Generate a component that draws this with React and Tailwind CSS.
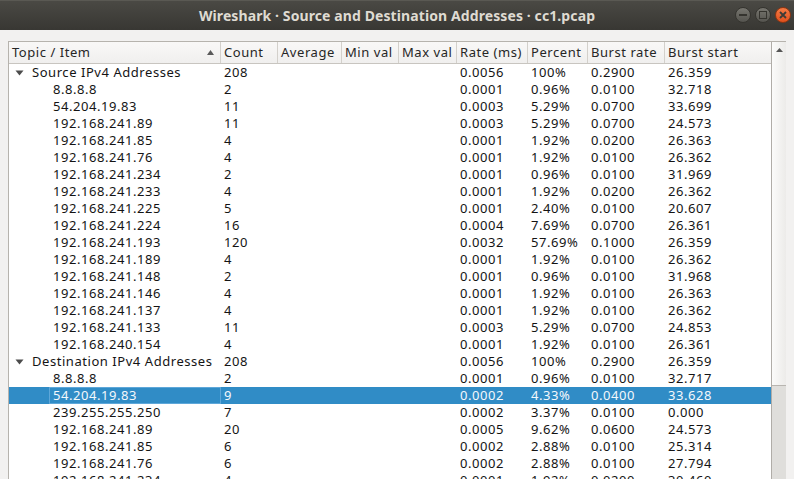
import React from "react";

const COLS = [212, 57, 64, 57, 58, 71, 60, 77, 106];
const HEAD = ["Topic / Item", "Count", "Average", "Min val", "Max val", "Rate (ms)", "Percent", "Burst rate", "Burst start"];

const rows = [
  { g: true, n: "Source IPv4 Addresses", c: "208", r: "0.0056", p: "100%", br: "0.2900", bs: "26.359" },
  { n: "8.8.8.8", c: "2", r: "0.0001", p: "0.96%", br: "0.0100", bs: "32.718" },
  { n: "54.204.19.83", c: "11", r: "0.0003", p: "5.29%", br: "0.0700", bs: "33.699" },
  { n: "192.168.241.89", c: "11", r: "0.0003", p: "5.29%", br: "0.0700", bs: "24.573" },
  { n: "192.168.241.85", c: "4", r: "0.0001", p: "1.92%", br: "0.0200", bs: "26.363" },
  { n: "192.168.241.76", c: "4", r: "0.0001", p: "1.92%", br: "0.0100", bs: "26.362" },
  { n: "192.168.241.234", c: "2", r: "0.0001", p: "0.96%", br: "0.0100", bs: "31.969" },
  { n: "192.168.241.233", c: "4", r: "0.0001", p: "1.92%", br: "0.0200", bs: "26.362" },
  { n: "192.168.241.225", c: "5", r: "0.0001", p: "2.40%", br: "0.0100", bs: "20.607" },
  { n: "192.168.241.224", c: "16", r: "0.0004", p: "7.69%", br: "0.0700", bs: "26.361" },
  { n: "192.168.241.193", c: "120", r: "0.0032", p: "57.69%", br: "0.1000", bs: "26.359" },
  { n: "192.168.241.189", c: "4", r: "0.0001", p: "1.92%", br: "0.0100", bs: "26.362" },
  { n: "192.168.241.148", c: "2", r: "0.0001", p: "0.96%", br: "0.0100", bs: "31.968" },
  { n: "192.168.241.146", c: "4", r: "0.0001", p: "1.92%", br: "0.0100", bs: "26.363" },
  { n: "192.168.241.137", c: "4", r: "0.0001", p: "1.92%", br: "0.0100", bs: "26.362" },
  { n: "192.168.241.133", c: "11", r: "0.0003", p: "5.29%", br: "0.0700", bs: "24.853" },
  { n: "192.168.240.154", c: "4", r: "0.0001", p: "1.92%", br: "0.0100", bs: "26.361" },
  { g: true, n: "Destination IPv4 Addresses", c: "208", r: "0.0056", p: "100%", br: "0.2900", bs: "26.359" },
  { n: "8.8.8.8", c: "2", r: "0.0001", p: "0.96%", br: "0.0100", bs: "32.717" },
  { sel: true, n: "54.204.19.83", c: "9", r: "0.0002", p: "4.33%", br: "0.0400", bs: "33.628" },
  { n: "239.255.255.250", c: "7", r: "0.0002", p: "3.37%", br: "0.0100", bs: "0.000" },
  { n: "192.168.241.89", c: "20", r: "0.0005", p: "9.62%", br: "0.0600", bs: "24.573" },
  { n: "192.168.241.85", c: "6", r: "0.0002", p: "2.88%", br: "0.0100", bs: "25.314" },
  { n: "192.168.241.76", c: "6", r: "0.0002", p: "2.88%", br: "0.0100", bs: "27.794" },
  { n: "192.168.241.234", c: "4", r: "0.0001", p: "1.92%", br: "0.0200", bs: "30.460" },
];

function Tri() {
  return (
    <svg width="9" height="6" viewBox="0 0 9 6" className="shrink-0">
      <path d="M0.5 0.5 L8.5 0.5 L4.5 5.5 Z" fill="#4c4c4c" />
    </svg>
  );
}

function Row({ row }) {
  const sel = row.sel;
  const vals = [row.c, "", "", "", row.r, row.p, row.br, row.bs];
  return (
    <div className={`flex h-[17px] items-center shrink-0 ${sel ? "bg-[#308cc6] text-[#f4f8fc]" : "text-[#141414]"}`}>
      <div className="w-[212px] shrink-0 h-full flex items-center">
        {row.g ? (
          <div className="flex items-center pl-[6px]">
            <Tri />
            <span className="ml-[8px] whitespace-nowrap">{row.n}</span>
          </div>
        ) : sel ? (
          <div className="ml-[40px] flex-1 h-full border border-[#5ea7d9] flex items-center pl-[3px] whitespace-nowrap">{row.n}</div>
        ) : (
          <span className="pl-[44px] whitespace-nowrap">{row.n}</span>
        )}
      </div>
      {vals.map((v, i) => (
        <div key={i} style={{ width: COLS[i + 1] }} className="shrink-0 pl-[3px] whitespace-nowrap overflow-hidden">
          {v}
        </div>
      ))}
    </div>
  );
}

export default function App() {
  return (
    <div
      className="w-[794px] h-[479px] overflow-hidden bg-[#f2f1f0] flex flex-col"
      style={{ fontFamily: '"Noto Sans", "DejaVu Sans", sans-serif' }}
    >
      {/* Title bar */}
      <div className="h-[30px] shrink-0 bg-gradient-to-b from-[#4a4944] to-[#383733] border-t border-[#5a5953] flex items-center relative">
        <div className="flex-1 text-center text-[#dfdbd2] font-bold text-[14px] tracking-[0.1px]">
          Wireshark · Source and Destination Addresses · cc1.pcap
        </div>
        <div className="absolute right-[3px] top-[6px] flex gap-[4px]">
          <div className="w-[16px] h-[16px] rounded-full bg-gradient-to-b from-[#77766f] to-[#55544f] border border-[#35342f] flex items-center justify-center">
            <div className="w-[8px] h-[2px] bg-[#35342f]" />
          </div>
          <div className="w-[16px] h-[16px] rounded-full bg-gradient-to-b from-[#77766f] to-[#55544f] border border-[#35342f] flex items-center justify-center">
            <div className="w-[8px] h-[8px] border-[1.5px] border-[#35342f]" />
          </div>
          <div className="w-[16px] h-[16px] rounded-full bg-gradient-to-b from-[#f47a44] to-[#e0501c] border border-[#8f3510] flex items-center justify-center">
            <svg width="8" height="8" viewBox="0 0 8 8">
              <path d="M1 1 L7 7 M7 1 L1 7" stroke="#3c3b37" strokeWidth="1.8" />
            </svg>
          </div>
        </div>
      </div>

      {/* Body */}
      <div className="flex-1 min-h-0 px-[8px] pt-[11px]">
        <div className="h-full flex border-l border-t border-r border-[#b6b3ad] bg-white">
          <div className="w-[762px] shrink-0 flex flex-col text-[13px] tracking-[0.55px] leading-[17px] overflow-hidden">
            {/* Header */}
            <div className="h-[22px] shrink-0 flex bg-gradient-to-b from-[#f9f8f7] to-[#f0efee] border-b border-[#c8c5c0] text-[#262626]">
              {HEAD.map((h, i) => (
                <div
                  key={i}
                  style={{ width: COLS[i] }}
                  className={`shrink-0 h-full flex items-center pl-[3px] whitespace-nowrap overflow-hidden ${i < HEAD.length - 1 ? "border-r border-[#d3d0cb]" : ""} ${i === 0 ? "justify-between pr-[6px]" : ""}`}
                >
                  <span>{h}</span>
                  {i === 0 && (
                    <svg width="7" height="5" viewBox="0 0 7 5">
                      <path d="M0 5 L3.5 0 L7 5 Z" fill="#5a5a5a" />
                    </svg>
                  )}
                </div>
              ))}
            </div>
            {rows.map((r, i) => (
              <Row key={i} row={r} />
            ))}
          </div>
          {/* Scrollbar */}
          <div className="w-[15px] shrink-0 flex flex-col border-l border-[#b0ada8] bg-[#dfdedb]">
            <div className="h-[344px] shrink-0 bg-gradient-to-r from-[#fbfbfa] to-[#ecebe9] border-b border-[#b8b5b0] flex flex-col items-center pt-[6px]">
              <svg width="7" height="4" viewBox="0 0 7 4">
                <path d="M0 4 L3.5 0 L7 4 Z" fill="#555" />
              </svg>
            </div>
          </div>
        </div>
      </div>
    </div>
  );
}
